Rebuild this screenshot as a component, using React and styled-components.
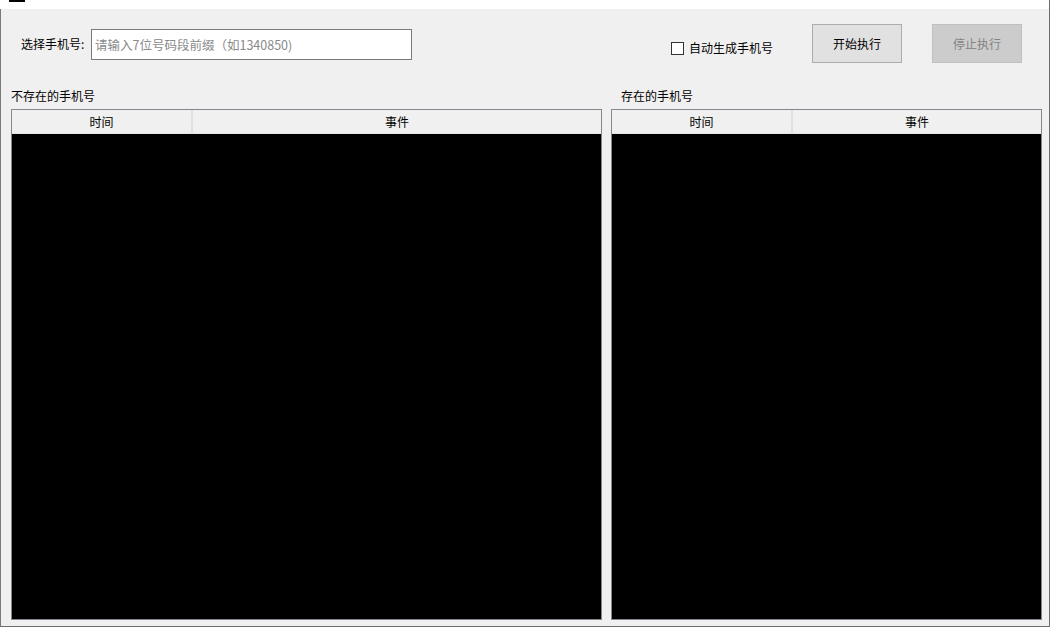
import React from "react";
import styled, { createGlobalStyle } from "styled-components";

const Global = createGlobalStyle`
  html, body {
    margin: 0;
    padding: 0;
    background: #ffffff;
  }
  body {
    font-family: "Noto Sans CJK SC", "Noto Sans", "Liberation Sans", sans-serif;
    font-size: 12px;
    color: #000;
  }
`;

const Frame = styled.div`
  width: 1050px;
  height: 627px;
  box-sizing: border-box;
  display: flex;
  flex-direction: column;
  border-right: 1px solid #6d6d6d;
  background: #f0f0f0;
`;

const TitleStrip = styled.div`
  height: 9px;
  flex: none;
  background: #ffffff;
  display: flex;
  align-items: flex-start;
`;

const TitleMark = styled.span`
  display: block;
  width: 16px;
  height: 2px;
  margin-left: 9px;
  background: #000;
`;

const Body = styled.div`
  flex: 1;
  display: flex;
  flex-direction: column;
  border-left: 1px solid #7a7a7a;
  border-bottom: 1px solid #6d6d6d;
  min-height: 0;
`;

const Toolbar = styled.div`
  height: 76px;
  flex: none;
  display: flex;
  align-items: flex-start;
`;

const Slot = styled.div`
  margin-top: ${(p) => p.$top}px;
  margin-left: ${(p) => p.$left}px;
  display: flex;
  align-items: center;
  flex: none;
`;

const FieldLabel = styled.span`
  width: 70px;
  font-size: 12px;
  line-height: 16px;
  white-space: nowrap;
`;

const TextInput = styled.input`
  width: 321px;
  height: 31px;
  box-sizing: border-box;
  border: 1px solid #7a7a7a;
  background: #fff;
  padding: 0 0 0 3px;
  margin: 0;
  font-family: inherit;
  font-size: 12.5px;
  outline: none;
  &::placeholder {
    color: #8a8a8a;
  }
`;

const CheckBox = styled.span`
  width: 13px;
  height: 13px;
  box-sizing: border-box;
  border: 1px solid #333333;
  background: #fff;
  display: block;
`;

const CheckText = styled.span`
  margin-left: 5px;
  font-size: 12px;
  line-height: 16px;
  white-space: nowrap;
`;

const Button = styled.button`
  width: 90px;
  height: 39px;
  box-sizing: border-box;
  margin: 0;
  padding: 0;
  font-family: inherit;
  font-size: 12px;
  border: 1px solid ${(p) => (p.disabled ? "#bfbfbf" : "#adadad")};
  background: ${(p) => (p.disabled ? "#cccccc" : "#e1e1e1")};
  color: ${(p) => (p.disabled ? "#838383" : "#000")};
`;

const Panels = styled.div`
  flex: 1;
  min-height: 0;
  display: flex;
  gap: 9px;
  padding: 0 7px 6px 10px;
`;

const Panel = styled.section`
  width: ${(p) => p.$width}px;
  flex: none;
  display: flex;
  flex-direction: column;
`;

const PanelTitle = styled.div`
  height: 24px;
  line-height: 21px;
  padding-left: ${(p) => p.$indent}px;
  font-size: 12px;
  white-space: nowrap;
`;

const Grid = styled.div`
  flex: 1;
  display: flex;
  flex-direction: column;
  border: 1px solid #828790;
  background: #000;
`;

const HeaderRow = styled.div`
  height: 24px;
  display: flex;
  background: #f0f0f0;
  border-bottom: 1px solid #e5e5e5;
  box-sizing: border-box;
`;

const HeaderCell = styled.div`
  width: ${(p) => (p.$width ? `${p.$width}px` : "auto")};
  flex: ${(p) => (p.$width ? "none" : "1")};
  box-sizing: border-box;
  border-right: ${(p) => (p.$width ? "2px solid #e0e0e0" : "none")};
  text-align: center;
  line-height: 23px;
  font-size: 12px;
`;

function LogGrid() {
  return (
    <Grid>
      <HeaderRow>
        <HeaderCell $width={181}>时间</HeaderCell>
        <HeaderCell>事件</HeaderCell>
      </HeaderRow>
    </Grid>
  );
}

export default function App() {
  return (
    <>
      <Global />
      <Frame>
        <TitleStrip>
          <TitleMark />
        </TitleStrip>
        <Body>
          <Toolbar>
            <Slot $top={27} $left={20}>
              <FieldLabel>选择手机号:</FieldLabel>
            </Slot>
            <Slot $top={20} $left={0}>
              <TextInput placeholder="请输入7位号码段前缀（如1340850)" />
            </Slot>
            <Slot $top={31} $left={259}>
              <CheckBox />
              <CheckText>自动生成手机号</CheckText>
            </Slot>
            <Slot $top={15} $left={39}>
              <Button>开始执行</Button>
            </Slot>
            <Slot $top={15} $left={30}>
              <Button disabled>停止执行</Button>
            </Slot>
          </Toolbar>
          <Panels>
            <Panel $width={591}>
              <PanelTitle $indent={0}>不存在的手机号</PanelTitle>
              <LogGrid />
            </Panel>
            <Panel $width={431}>
              <PanelTitle $indent={10}>存在的手机号</PanelTitle>
              <LogGrid />
            </Panel>
          </Panels>
        </Body>
      </Frame>
    </>
  );
}
